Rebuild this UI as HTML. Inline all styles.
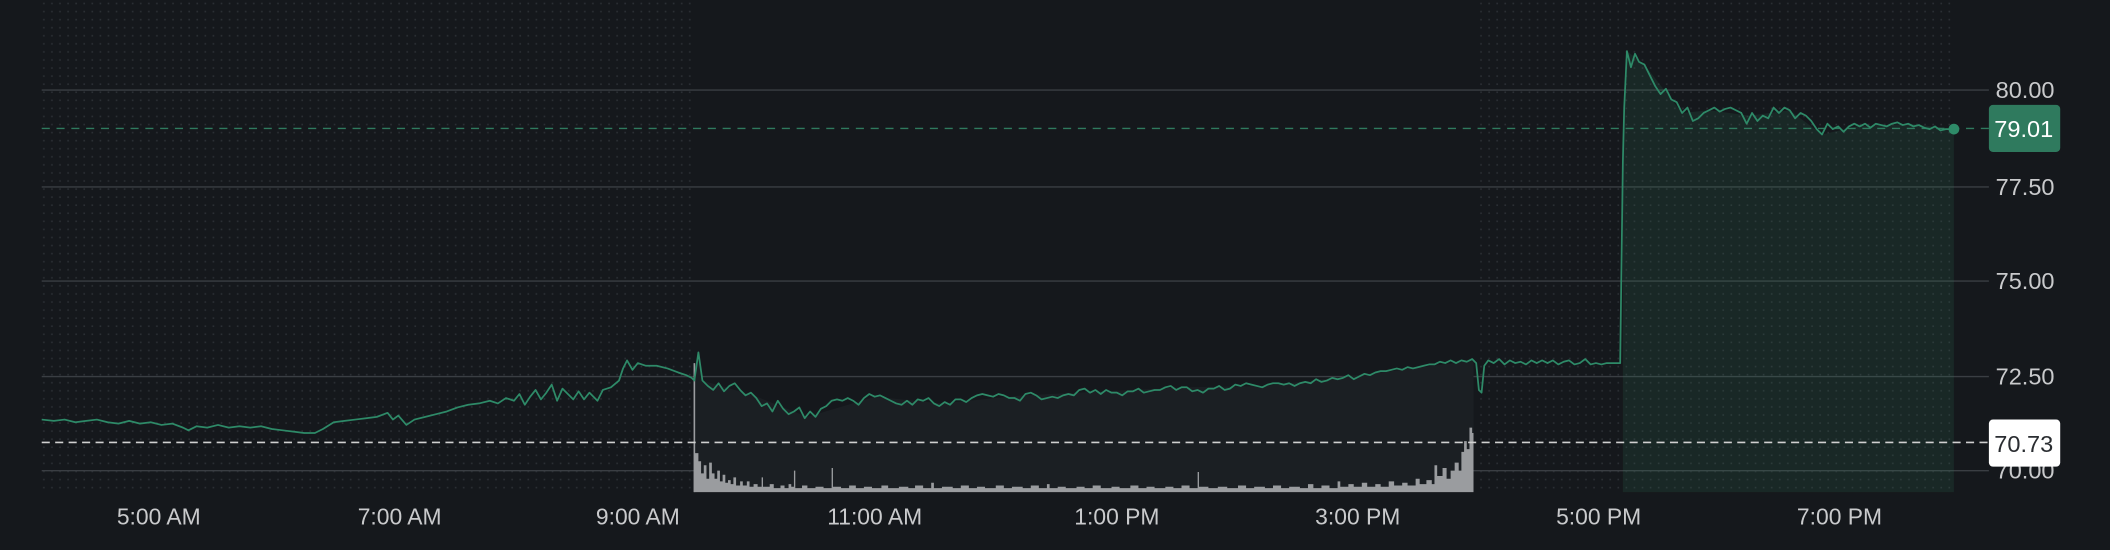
<!DOCTYPE html>
<html><head><meta charset="utf-8"><style>
html,body{margin:0;padding:0;background:#15181c;overflow:hidden}
svg{display:block}
text{font-family:"Liberation Sans",sans-serif}
</style></head><body>
<svg width="2110" height="550" viewBox="0 0 1568 409" preserveAspectRatio="none" xmlns="http://www.w3.org/2000/svg">
<defs>
<pattern id="dots" width="6" height="6" patternUnits="userSpaceOnUse"><rect x="2" y="2" width="1.2" height="1.2" fill="#2b2f34"/></pattern>
</defs>
<rect width="1568" height="409" fill="#15181c"/>
<rect x="31" y="0" width="485" height="366" fill="url(#dots)"/>
<rect x="1098" y="0" width="355" height="366" fill="url(#dots)"/>
<g stroke="#3a3e43" stroke-width="1">
<line x1="31" y1="67" x2="1478" y2="67"/>
<line x1="31" y1="139" x2="1478" y2="139"/>
<line x1="31" y1="209" x2="1478" y2="209"/>
<line x1="31" y1="280" x2="1478" y2="280"/>
<line x1="31" y1="350" x2="1478" y2="350"/>
</g>
<path fill="#1b1f23" d="M516,366 L516,283 L519,262 L522,283 L560,294 L600,310 L650,295 L700,300 L760,294 L820,291 L880,288 L940,287 L1000,280 L1050,274 L1095,268 L1095,366Z"/>
<path fill="#2f7a5e" fill-opacity="0.16" d="M1206,366 L1206,120 L1209,38 L1222,48 L1250,84 L1270,82 L1300,86 L1330,82 L1354,100 L1380,94 L1420,92 L1452,96 L1452,366Z"/>
<path fill="#9a9c9f" d="M516,366 V337 H519 V343 H521 V352 H523 V346 H525 V356 H527 V344 H529 V352 H531 V356 H533 V350 H535 V358 H537 V353 H539 V359 H541 V357 H543 V360 H545 V355 H547 V361 H550 V358 H552 V361 H555 V358 H557 V362 H560 V360 H563 V362 H566 V355 H567 V362 H572 V360 H575 V363 H580 V361 H583 V363 H586 V360 H588 V362 H590 V350 H591 V363 H596 V361 H600 V363 H606 V362 H612 V363 H618 V348 H619 V362 H625 V363 H631 V361 H636 V363 H642 V362 H648 V363 H655 V361 H660 V363 H668 V362 H675 V363 H680 V361 H686 V363 H692 V359 H694 V363 H700 V362 H708 V363 H714 V361 H720 V363 H726 V362 H732 V363 H740 V361 H746 V363 H752 V362 H760 V363 H766 V361 H772 V363 H778 V360 H780 V363 H786 V362 H792 V363 H800 V362 H806 V363 H812 V361 H818 V363 H826 V362 H832 V363 H840 V361 H846 V363 H852 V362 H858 V363 H866 V362 H872 V363 H878 V361 H884 V363 H890 V351 H891 V362 H898 V363 H905 V362 H912 V363 H920 V361 H926 V363 H932 V362 H940 V363 H946 V361 H952 V363 H958 V362 H966 V363 H972 V360 H976 V363 H982 V361 H988 V363 H994 V358 H996 V362 H1002 V360 H1006 V362 H1012 V359 H1016 V362 H1022 V360 H1026 V362 H1032 V358 H1036 V361 H1042 V359 H1046 V361 H1052 V356 H1055 V360 H1060 V357 H1064 V360 H1066 V346 H1068 V354 H1072 V348 H1075 V356 H1078 V350 H1081 V344 H1084 V350 H1086 V336 H1088 V328 H1090 V334 H1092 V318 H1094 V322 H1095 V366 Z"/>
<line x1="516" y1="270" x2="516" y2="366" stroke="#9a9c9f" stroke-width="1.2"/>
<line x1="31" y1="95.5" x2="1478" y2="95.5" stroke="#2f7a5e" stroke-width="1" stroke-dasharray="6 5"/>
<line x1="31" y1="329" x2="1478" y2="329" stroke="#d0d0d0" stroke-width="1.2" stroke-dasharray="6 4"/>
<path fill="none" stroke="#2e8a68" stroke-width="1.3" stroke-linejoin="round" d="M31,312 L40,313 48,312 56,314 64,313 72,312 80,314 88,315 96,313 104,315 112,314 120,316 128,315 136,318 140,320 146,317 154,318 162,316 170,318 178,317 186,318 194,317 202,319 210,320 218,321 226,322 234,322 240,319 248,314 256,313 264,312 272,311 280,310 288,307 292,312 296,309 302,316 308,312 316,310 324,308 332,306 340,303 348,301 356,300 364,298 370,300 376,296 382,298 386,293 390,301 394,295 398,290 402,297 406,292 410,286 414,298 418,289 422,293 426,297 430,291 434,297 438,292 444,298 448,290 454,288 460,283 463,274 466,268 470,275 474,270 480,272 488,272 496,274 504,277 510,279 514,281 516,283 519,262 522,283 526,287 530,290 534,285 538,291 542,287 546,285 550,290 554,294 558,292 562,296 566,302 570,300 574,306 578,298 582,304 586,308 590,306 594,303 598,311 602,306 606,310 610,304 614,302 618,298 622,297 626,298 630,296 634,298 638,301 642,296 646,293 650,295 654,294 658,296 662,298 666,300 670,301 674,298 678,301 682,297 686,298 690,296 694,300 698,302 702,299 706,301 710,297 714,297 718,299 722,296 726,294 730,293 734,294 738,295 742,293 746,294 750,296 754,296 758,298 762,293 766,292 770,294 774,297 778,296 782,295 786,296 790,294 794,293 798,294 802,290 806,289 810,292 814,290 818,293 822,290 826,292 830,292 834,294 838,291 842,291 846,289 850,292 854,291 858,290 862,290 866,288 870,287 874,290 878,288 882,288 886,291 890,290 894,292 898,289 902,289 906,287 910,290 914,289 918,286 922,287 926,285 930,286 934,287 938,288 942,286 946,285 950,285 954,286 958,285 962,287 966,285 970,284 974,285 978,282 982,284 986,283 990,281 994,282 998,281 1002,279 1006,282 1010,280 1014,278 1018,279 1022,277 1026,276 1030,276 1034,275 1038,274 1042,275 1046,273 1050,274 1054,273 1058,272 1062,271 1066,271 1070,269 1074,270 1078,268 1082,270 1086,268 1090,269 1094,267 1097,270 1099,290 1101,292 1103,272 1106,268 1110,270 1114,267 1118,271 1122,268 1126,270 1130,269 1134,271 1138,268 1142,270 1146,268 1150,270 1154,268 1158,271 1162,269 1166,268 1170,271 1174,270 1178,267 1182,271 1186,270 1190,271 1194,270 1198,270 1204,270 1206,120 1207,80 1209,38 1212,50 1215,40 1218,46 1222,48 1226,56 1230,64 1234,70 1238,66 1242,74 1246,76 1250,84 1254,80 1258,90 1262,88 1266,84 1270,82 1274,80 1278,83 1282,81 1286,80 1290,82 1294,84 1298,92 1302,84 1306,90 1310,86 1314,88 1318,80 1322,84 1326,80 1330,82 1334,88 1338,84 1342,86 1346,90 1350,96 1354,100 1358,92 1362,96 1366,94 1370,98 1374,94 1378,92 1382,94 1386,92 1390,95 1394,92 1398,93 1402,94 1406,92 1410,91 1414,93 1418,92 1422,94 1426,93 1430,95 1434,96 1438,94 1442,97 1446,96 1452,96"/>
<circle cx="1452" cy="96" r="4" fill="#2e8a68"/>
<g fill="#c9cacc" font-size="17.5">
<text x="1483" y="73">80.00</text>
<text x="1483" y="145">77.50</text>
<text x="1483" y="215">75.00</text>
<text x="1483" y="286">72.50</text>
<text x="1483" y="356">70.00</text>
</g>
<rect x="1478" y="78" width="53" height="35" rx="3" fill="#2f7a5e"/>
<text x="1482" y="102" font-size="17.5" fill="#ffffff">79.01</text>
<rect x="1478" y="312" width="53" height="35" rx="3" fill="#ffffff"/>
<text x="1482" y="336" font-size="17.5" fill="#2a2d31">70.73</text>
<g fill="#c9cacc" font-size="17" text-anchor="middle">
<text x="118" y="390">5:00 AM</text>
<text x="297" y="390">7:00 AM</text>
<text x="474" y="390">9:00 AM</text>
<text x="650" y="390">11:00 AM</text>
<text x="830" y="390">1:00 PM</text>
<text x="1009" y="390">3:00 PM</text>
<text x="1188" y="390">5:00 PM</text>
<text x="1367" y="390">7:00 PM</text>
</g>
</svg>
</body></html>
